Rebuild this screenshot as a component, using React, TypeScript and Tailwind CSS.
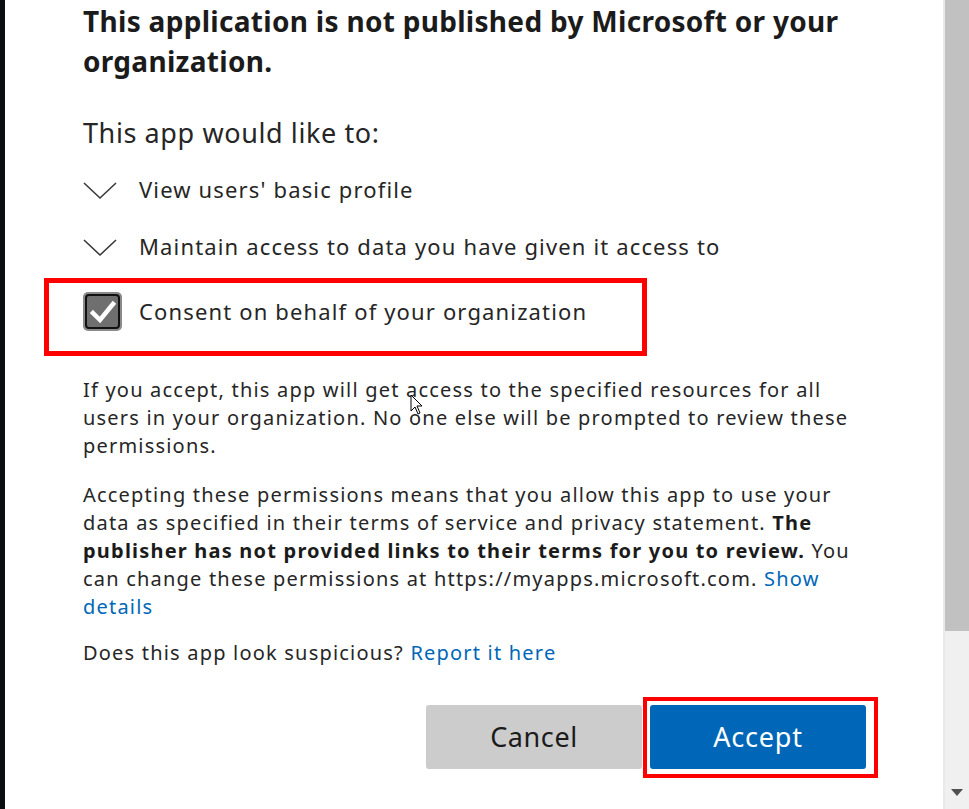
import React from "react";

const font = { fontFamily: '"Noto Sans", "Open Sans", sans-serif' };

function Chevron() {
  return (
    <svg width="34" height="20" viewBox="0 0 34 20" className="shrink-0">
      <path d="M1 3 L17 18 L33 3" fill="none" stroke="#3a3a3a" strokeWidth="1.6" />
    </svg>
  );
}

function CheckBox() {
  return (
    <div className="w-[39px] h-[39px] rounded-[5px] bg-[#8a8a8a] p-[2px] shrink-0">
      <div className="w-full h-full rounded-[4px] border-2 border-[#111] bg-[#6f6f6f] flex items-center justify-center">
        <svg width="26" height="24" viewBox="0 0 26 24">
          <path d="M3 13 L10 20 L23 4" fill="none" stroke="#fff" strokeWidth="4.5" strokeLinecap="square" />
        </svg>
      </div>
    </div>
  );
}

export default function App() {
  return (
    <div className="w-[969px] h-[809px] flex bg-white overflow-hidden text-[#262626]" style={font}>
      <div className="w-[5px] h-full bg-[#0b0e11] shrink-0" />
      <div className="flex-1 relative pl-[78px] pr-[40px]">
        <h1 className="text-[28px] leading-[40px] font-bold tracking-[0.3px] text-[#1b1b1b] mt-[1px] whitespace-nowrap">
          This application is not published by Microsoft or your
          <br />
          organization.
        </h1>
        <div className="text-[27px] leading-[36px] tracking-[0.6px] mt-[34px] text-[#262626]">This app would like to:</div>
        <div className="mt-[10px] flex flex-col text-[22px] tracking-[1.15px]">
          <div className="flex items-center gap-[22px] h-[57px]">
            <Chevron />
            <span>View users' basic profile</span>
          </div>
          <div className="flex items-center gap-[22px] h-[57px]">
            <Chevron />
            <span>Maintain access to data you have given it access to</span>
          </div>
        </div>
        <div className="relative flex items-start gap-[17px] h-[78px] mt-[3px] pt-[14px] text-[22px] tracking-[1.15px]">
          <CheckBox />
          <span className="leading-[39px]">Consent on behalf of your organization</span>
          <div className="absolute left-[-39px] top-0 w-[603px] h-[78px] border-[5px] border-[#ff0000]" />
        </div>
        <div className="text-[20px] leading-[28px] tracking-[1.2px] whitespace-nowrap">
          <p className="mt-[20px]">
            If you accept, this app will get access to the specified resources for all
            <br />
            users in your organization. No one else will be prompted to review these
            <br />
            permissions.
          </p>
          <p className="mt-[21px]">
            Accepting these permissions means that you allow this app to use your
            <br />
            data as specified in their terms of service and privacy statement. <b className="text-[#1b1b1b]">The</b>
            <br />
            <b className="text-[#1b1b1b]">publisher has not provided links to their terms for you to review.</b> You
            <br />
            can change these permissions at https://myapps.microsoft.com. <span className="text-[#0067b8]">Show</span>
            <br />
            <span className="text-[#0067b8]">details</span>
          </p>
          <p className="mt-[18px]">
            Does this app look suspicious? <span className="text-[#0067b8]">Report it here</span>
          </p>
        </div>
        <div className="flex justify-start gap-[8px] mt-[38px] pl-[343px]">
          <button className="w-[216px] h-[64px] rounded-[3px] bg-[#cccccc] text-[27px] tracking-[0.6px] text-[#1b1b1b]">Cancel</button>
          <div className="relative">
            <button className="w-[216px] h-[64px] rounded-[3px] bg-[#0067b8] text-[27px] tracking-[0.8px] text-white">Accept</button>
            <div className="absolute left-[-7px] top-[-8px] w-[235px] h-[81px] border-[4px] border-[#ff0000]" />
          </div>
        </div>
        <svg className="absolute left-[405px] top-[394px]" width="14" height="22" viewBox="0 0 14 22">
          <path d="M1 1 L1 17 L5 13 L8 20 L10 19 L7 12 L12 12 Z" fill="#fff" stroke="#000" strokeWidth="1" />
        </svg>
      </div>
      <div className="w-[26px] h-full shrink-0 flex flex-col bg-[#f0f0f0] border-l-2 border-[#e9e9e9]">
        <div className="h-[631px] bg-[#c1c1c1]" />
        <div className="flex-1" />
        <div className="h-[22px] flex items-start justify-center pt-[2px]">
          <svg width="12" height="8" viewBox="0 0 12 8">
            <path d="M0 0 L12 0 L6 7 Z" fill="#505050" />
          </svg>
        </div>
      </div>
    </div>
  );
}
